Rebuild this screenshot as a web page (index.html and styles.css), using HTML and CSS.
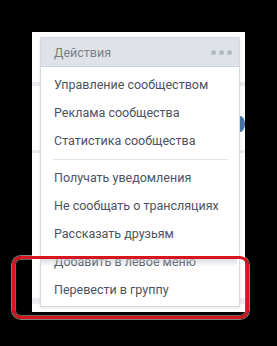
FILE: index.html
```html
<!DOCTYPE html>
<html lang="ru">
<head>
  <meta charset="UTF-8" />
  <title>Действия</title>
  <link rel="stylesheet" href="styles.css">
</head>
<body>
  <div class="page">
    <span class="page-icon"></span>
    <div class="menu">
      <div class="menu-head">
        <span>Действия</span>
        <span class="dots"><i></i><i></i><i></i></span>
      </div>
      <div class="menu-list">
        <div class="item">Управление сообществом</div>
        <div class="item">Реклама сообщества</div>
        <div class="item">Статистика сообщества</div>
        <div class="sep"></div>
        <div class="item">Получать уведомления</div>
        <div class="item">Не сообщать о трансляциях</div>
        <div class="item">Рассказать друзьям</div>
        <div class="item cut">Добавить в левое меню</div>
        <div class="item">Перевести в группу</div>
      </div>
    </div>
  </div>
  <div class="mark"></div>
</body>
</html>
```

FILE: styles.css
```css
html, body {
  margin: 0;
  background: #000;
}
body {
  width: 277px;
  height: 346px;
  position: relative;
  font-family: Roboto, "Open Sans", sans-serif;
}
.page {
  position: relative;
  margin: 32px 0 0 32px;
  width: 213px;
  height: 280px;
  box-sizing: border-box;
  padding: 5px 5px 0 8px;
  background:
    linear-gradient(#fff 50px, #e9ebee 50px, #e9ebee 54px, #fff 54px, #fff 118px, #e9ebee 118px, #e9ebee 121px, #fff 121px, #fff 266px, #eceef1 266px, #eceef1 272px, #fff 272px);
}
.page-icon {
  position: absolute;
  right: 0;
  top: 84px;
  width: 10px;
  height: 16px;
  border-radius: 50%;
  background: #4a76a8;
}
.menu {
  position: relative;
  width: 200px;
  background: #fff;
  border: 1px solid #d3d9de;
  box-sizing: border-box;
  box-shadow: 0 1px 3px rgba(0,0,0,0.1);
}
.menu-head {
  display: flex;
  align-items: center;
  justify-content: space-between;
  height: 28px;
  padding: 0 7px 0 13px;
  background: #dfe3e8;
  border-bottom: 1px solid #cfd5dc;
  color: #7a8088;
  font-size: 12.5px;
}
.dots {
  display: flex;
  gap: 3px;
}
.dots i {
  width: 5px;
  height: 5px;
  border-radius: 50%;
  background: #b3bbc5;
}
.menu-list {
  padding: 4px 0 2px;
}
.item {
  height: 28px;
  line-height: 28px;
  padding-left: 13px;
  color: #4a5361;
  font-size: 12.5px;
  white-space: nowrap;
}
.sep {
  height: 1px;
  margin: 4px 11px 4px 12px;
  background: #e1e5ea;
}
.mark {
  position: absolute;
  left: 12px;
  top: 256px;
  width: 237px;
  height: 63px;
  box-sizing: border-box;
  border: 3px solid #d8141c;
  border-radius: 9px;
  box-shadow: 0 0 0 1px rgba(255,255,255,0.5), inset 0 0 0 1px rgba(255,255,255,0.4);
}
.mark::before {
  content: "";
  position: absolute;
  left: 26px;
  right: 9px;
  top: -7px;
  height: 4px;
  background: #fff;
}
.mark::after {
  content: "";
  position: absolute;
  left: 26px;
  right: 9px;
  top: 0;
  height: 8px;
  background: linear-gradient(rgba(190,195,200,0.55), rgba(255,255,255,0));
}
```
